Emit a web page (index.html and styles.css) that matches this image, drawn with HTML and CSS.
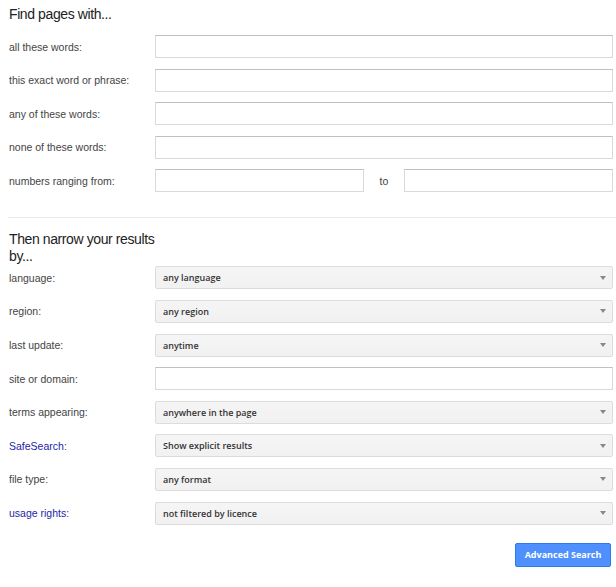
FILE: index.html
```html
<!DOCTYPE html>
<html>
<head>
<meta charset="utf-8">
<link rel="stylesheet" href="styles.css">
</head>
<body>
<div class="page">
  <h2 class="title">Find pages with...</h2>
  <div class="rows">
    <div class="row"><span class="label">all these words:</span><div class="input"></div></div>
    <div class="row"><span class="label">this exact word or phrase:</span><div class="input"></div></div>
    <div class="row"><span class="label">any of these words:</span><div class="input"></div></div>
    <div class="row"><span class="label">none of these words:</span><div class="input"></div></div>
    <div class="row"><span class="label">numbers ranging from:</span>
      <div class="range"><div class="input"></div><span class="to">to</span><div class="input"></div></div>
    </div>
  </div>
  <div class="sep"></div>
  <h2 class="title narrow">Then narrow your results by...</h2>
  <div class="rows">
    <div class="row"><span class="label">language:</span><div class="select"><span>any language</span><i class="arrow"></i></div></div>
    <div class="row"><span class="label">region:</span><div class="select"><span>any region</span><i class="arrow"></i></div></div>
    <div class="row"><span class="label">last update:</span><div class="select"><span>anytime</span><i class="arrow"></i></div></div>
    <div class="row"><span class="label">site or domain:</span><div class="input"></div></div>
    <div class="row"><span class="label">terms appearing:</span><div class="select"><span>anywhere in the page</span><i class="arrow"></i></div></div>
    <div class="row"><span class="label"><span class="link">SafeSearch</span>:</span><div class="select"><span>Show explicit results</span><i class="arrow"></i></div></div>
    <div class="row"><span class="label">file type:</span><div class="select"><span>any format</span><i class="arrow"></i></div></div>
    <div class="row"><span class="label"><span class="link">usage rights</span>:</span><div class="select"><span>not filtered by licence</span><i class="arrow"></i></div></div>
  </div>
  <div class="actions"><button class="btn">Advanced Search</button></div>
</div>
</body>
</html>
```
FILE: styles.css
```css
html, body { margin: 0; padding: 0; background: #fff; }
body { font-family: "Liberation Sans", Arial, sans-serif; color: #222; }
.page { padding: 0 3px 0 9px; }
.title {
  margin: 0;
  font-weight: normal;
  font-size: 14px;
  letter-spacing: -0.4px;
  line-height: 17px;
  color: #222;
  padding-top: 6px;
  height: 29px;
}
.title.narrow { width: 150px; height: auto; padding-top: 13px; padding-bottom: 1px; }
.rows { display: flex; flex-direction: column; gap: 10.6px; }
.row { display: flex; align-items: center; height: 23px; }
.label { font-size: 10.5px; width: 146px; flex: none; color: #444; }
.link { color: #2424a8; }
.input {
  flex: 1;
  height: 23px;
  box-sizing: border-box;
  border: 1px solid #d9d9d9;
  border-top-color: #c0c0c0;
  background: #fff;
}
.range { flex: 1; display: flex; align-items: center; }
.range .to { font-size: 10.5px; width: 40px; text-align: center; flex: none; color: #444; }
.sep { height: 1px; background: #ebebeb; margin: 25px -3px 0 -1px; }
.select {
  flex: 1;
  height: 23px;
  box-sizing: border-box;
  border: 1px solid #dcdcdc;
  border-radius: 2px;
  background: linear-gradient(#f5f5f5, #f1f1f1);
  display: flex;
  align-items: center;
  padding: 0 6px 0 7px;
  font-family: "Open Sans", sans-serif;
  font-weight: 600;
  font-size: 9px;
  color: #333;
}
.select span { flex: 1; }
.arrow {
  width: 0; height: 0;
  border-left: 3px solid transparent;
  border-right: 3px solid transparent;
  border-top: 4px solid #888;
}
.actions { display: flex; justify-content: flex-end; padding: 18px 2px 0 0; }
.btn {
  width: 96px; height: 24px;
  background: #4d90fe;
  border: 1px solid #3079ed;
  border-radius: 2px;
  color: #fff;
  font-family: "Open Sans", sans-serif;
  font-weight: 700;
  font-size: 9px;
  padding: 0;
}
```
